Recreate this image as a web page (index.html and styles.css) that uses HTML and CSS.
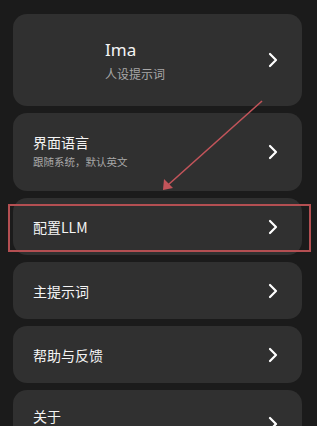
FILE: index.html
```html
<!DOCTYPE html>
<html>
<head>
<meta charset="utf-8">
<link rel="stylesheet" href="styles.css">
</head>
<body>
<div class="list">
  <div class="card card-profile">
    <div class="text profile-text">
      <div class="name">Ima</div>
      <div class="sub">人设提示词</div>
    </div>
    <svg class="chev" viewBox="0 0 10 16"><path d="M2 2 L8 8 L2 14" /></svg>
  </div>
  <div class="card card-two">
    <div class="text">
      <div class="title">界面语言</div>
      <div class="sub small">跟随系统，默认英文</div>
    </div>
    <svg class="chev" viewBox="0 0 10 16"><path d="M2 2 L8 8 L2 14" /></svg>
  </div>
  <div class="card">
    <div class="text"><div class="title">配置LLM</div></div>
    <svg class="chev" viewBox="0 0 10 16"><path d="M2 2 L8 8 L2 14" /></svg>
  </div>
  <div class="card">
    <div class="text"><div class="title">主提示词</div></div>
    <svg class="chev" viewBox="0 0 10 16"><path d="M2 2 L8 8 L2 14" /></svg>
  </div>
  <div class="card">
    <div class="text"><div class="title">帮助与反馈</div></div>
    <svg class="chev" viewBox="0 0 10 16"><path d="M2 2 L8 8 L2 14" /></svg>
  </div>
  <div class="card card-last">
    <div class="text text-last"><div class="title">关于</div></div>
    <svg class="chev" viewBox="0 0 10 16"><path d="M2 2 L8 8 L2 14" /></svg>
  </div>
</div>
<div class="highlight"></div>
<svg class="arrow" width="317" height="426" viewBox="0 0 317 426">
  <line x1="262" y1="101" x2="168" y2="185" />
  <path d="M163 190 L164 179 L173 188 Z" />
</svg>
</body>
</html>
```
FILE: styles.css
```css
html, body {
  margin: 0;
  padding: 0;
  background: #1b1b1b;
  width: 317px;
  height: 426px;
  overflow: hidden;
  font-family: "Noto Sans CJK SC", "Noto Sans", sans-serif;
  color: #f2f2f2;
}
.list {
  display: flex;
  flex-direction: column;
  gap: 7px;
  padding: 14px 15px 0 13px;
}
.card {
  background: #303030;
  border-radius: 14px;
  height: 57px;
  display: flex;
  align-items: center;
  padding: 0 24px 0 20px;
  box-sizing: border-box;
  flex-shrink: 0;
}
.card-profile {
  height: 92px;
  padding-left: 92px;
}
.card-two {
  height: 78px;
}
.card-two .text {
  margin-bottom: 3px;
}
.card-last {
  height: 68px;
}
.text {
  flex: 1;
  display: flex;
  flex-direction: column;
}
.text-last {
  padding-bottom: 16px;
}
.name {
  font-family: "Noto Sans", sans-serif;
  font-size: 17px;
  line-height: 22px;
  color: #f4f4f4;
}
.profile-text .sub {
  margin-top: 5px;
}
.title {
  font-size: 14px;
  line-height: 22px;
  color: #f4f4f4;
}
.sub {
  font-size: 12px;
  line-height: 16px;
  color: #a8a8a8;
}
.sub.small {
  font-size: 10.5px;
  margin-top: 1px;
}
.chev {
  width: 10px;
  height: 16px;
  fill: none;
  stroke: #ffffff;
  stroke-width: 2.2;
  stroke-linecap: round;
  stroke-linejoin: round;
}
.highlight {
  position: absolute;
  left: 8px;
  top: 204px;
  width: 303px;
  height: 48px;
  border: 2px solid #b44f52;
  box-sizing: border-box;
}
.arrow {
  position: absolute;
  left: 0;
  top: 0;
  pointer-events: none;
}
.arrow line {
  stroke: #c2545a;
  stroke-width: 1.6;
}
.arrow path {
  fill: #c2545a;
}
```
